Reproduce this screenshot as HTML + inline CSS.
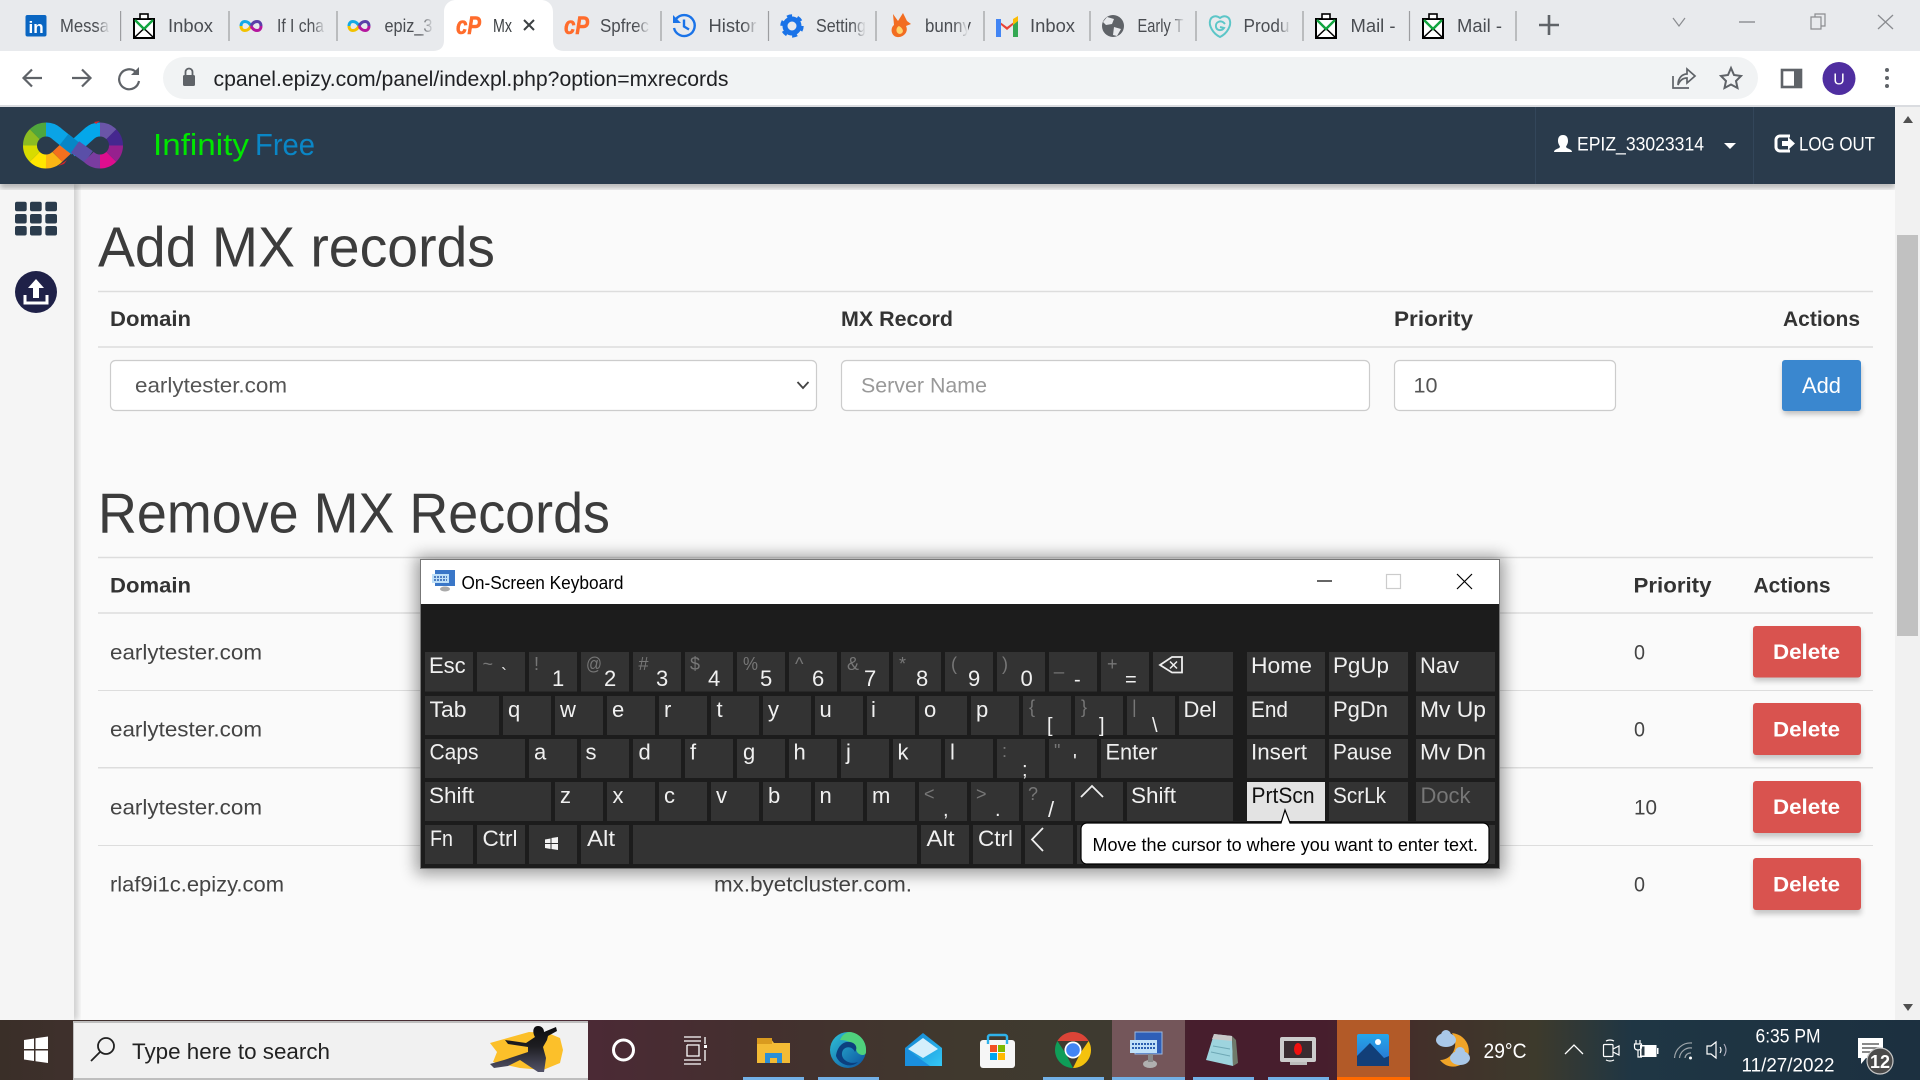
<!DOCTYPE html>
<html lang="en"><head><meta charset="utf-8"><title>Add MX records</title>
<style>
html,body{margin:0;padding:0;width:1920px;height:1080px;overflow:hidden;background:#fafafa}
svg{display:block}
text{font-family:"Liberation Sans",Arial,sans-serif}
</style></head><body>
<svg xmlns="http://www.w3.org/2000/svg" width="1920" height="1080" viewBox="0 0 1920 1080">
<defs>
<linearGradient id="tb" x1="0" x2="1" y1="0" y2="0">
<stop offset="0" stop-color="#3a2f28"/><stop offset=".05" stop-color="#40302e"/><stop offset=".31" stop-color="#4b2a35"/><stop offset=".4" stop-color="#43302e"/><stop offset=".5" stop-color="#40392e"/><stop offset=".58" stop-color="#3e3a30"/><stop offset=".62" stop-color="#471e2d"/><stop offset=".69" stop-color="#471e2d"/><stop offset=".74" stop-color="#43302a"/><stop offset=".8" stop-color="#3d3a2c"/><stop offset=".85" stop-color="#1f3644"/><stop offset="1" stop-color="#1c3040"/>
</linearGradient>
<filter id="b8" x="-10%" y="-10%" width="120%" height="120%"><feGaussianBlur stdDeviation="8"/></filter>
<filter id="b3" x="-20%" y="-20%" width="140%" height="140%"><feGaussianBlur stdDeviation="3"/></filter>
<linearGradient id="fade" x1="0" x2="1" y1="0" y2="0"><stop offset="0" stop-color="#e8eaed" stop-opacity="0"/><stop offset="1" stop-color="#e8eaed"/></linearGradient>
<linearGradient id="edge" x1="0" x2="1" y1="0" y2="1"><stop offset="0" stop-color="#2fc3d8"/><stop offset="1" stop-color="#0b4f9e"/></linearGradient>
<linearGradient id="mail" x1="0" x2="1" y1="0" y2="1"><stop offset="0" stop-color="#0f7fd0"/><stop offset="1" stop-color="#35c8f5"/></linearGradient>
<linearGradient id="photo" x1="0" x2="0" y1="0" y2="1"><stop offset="0" stop-color="#25a6ea"/><stop offset="1" stop-color="#2a6fd0"/></linearGradient>
<linearGradient id="kick" x1="0" x2="0" y1="0" y2="1"><stop offset="0" stop-color="#0c0c0e"/><stop offset=".45" stop-color="#1e1e22"/><stop offset="1" stop-color="#54546a"/></linearGradient>
<g id="env"><rect x="-10" y="-7" width="20" height="19" fill="#fff" stroke="#000" stroke-width="2"/><path d="M-10 12L10-7M-10-7L10 12" stroke="#000" stroke-width="1.500"/><path d="M-9-6L0 3L9-6" fill="none" stroke="#12a53f" stroke-width="2.400"/><rect x="-4" y="-12" width="8" height="5" fill="#fff" stroke="#000" stroke-width="1.600"/></g>
<g id="inf" fill="none" stroke-width="3"><path d="M0 0C-3-6-10-6-10 0" stroke="#12a9e6"/><path d="M-10 0C-10 6-3 6 0 0" stroke="#f2c200"/><path d="M0 0C3-6 10-6 10 0" stroke="#5b3ea8"/><path d="M10 0C10 6 3 6 0 0" stroke="#b5179e"/></g>
</defs>

<!-- tab strip -->
<rect width="1920" height="51" fill="#e8eaed"/>
<path d="M432 51C441 51 444 47 444 40V12C444 5 449 0 456 0H541C548 0 553 5 553 12V40C553 47 556 51 565 51Z" fill="#fff"/>
<g stroke="#9c9da0" stroke-width="1.200"><path d="M120.600 11V41M229 11V41M337 11V41M661 11V41M768.500 11V41M876 11V41M984 11V41M1090 11V41M1196 11V41M1303 11V41M1409.500 11V41M1516 11V41"/></g>
<g font-size="18" fill="#4a4d52">
<text x="60" y="32" textLength="49" lengthAdjust="spacingAndGlyphs">Messa</text>
<text x="168" y="32" textLength="45" lengthAdjust="spacingAndGlyphs">Inbox</text>
<text x="277" y="32" textLength="47" lengthAdjust="spacingAndGlyphs">If I cha</text>
<text x="384.500" y="32" textLength="48" lengthAdjust="spacingAndGlyphs">epiz_3</text>
<text x="493" y="32" fill="#3c4043" textLength="19" lengthAdjust="spacingAndGlyphs">Mx</text>
<text x="600" y="32" textLength="49" lengthAdjust="spacingAndGlyphs">Spfrec</text>
<text x="708.500" y="32" textLength="48" lengthAdjust="spacingAndGlyphs">Histor</text>
<text x="816" y="32" textLength="50" lengthAdjust="spacingAndGlyphs">Setting</text>
<text x="925" y="32" textLength="46" lengthAdjust="spacingAndGlyphs">bunny</text>
<text x="1030" y="32" textLength="45" lengthAdjust="spacingAndGlyphs">Inbox</text>
<text x="1137.500" y="32" textLength="46" lengthAdjust="spacingAndGlyphs">Early T</text>
<text x="1243.500" y="32" textLength="46" lengthAdjust="spacingAndGlyphs">Produ</text>
<text x="1350.500" y="32" textLength="45" lengthAdjust="spacingAndGlyphs">Mail -</text>
<text x="1457" y="32" textLength="45" lengthAdjust="spacingAndGlyphs">Mail -</text>
</g>
<g fill="url(#fade)"><rect x="96" y="10" width="14" height="32"/><rect x="312" y="10" width="14" height="32"/><rect x="420" y="10" width="14" height="32"/><rect x="636" y="10" width="14" height="32"/><rect x="744" y="10" width="14" height="32"/><rect x="852" y="10" width="14" height="32"/><rect x="954" y="10" width="14" height="32"/><rect x="1171" y="10" width="14" height="32"/><rect x="1277" y="10" width="14" height="32"/></g>
<path d="M524 20L534 30M534 20L524 30" stroke="#3c4043" stroke-width="2"/>
<!-- favicons -->
<rect x="25.500" y="15" width="21" height="21.500" rx="2" fill="#0a66c2"/><text x="28.500" y="33" font-size="17" font-weight="bold" fill="#fff">in</text>
<use href="#env" x="144" y="26"/><use href="#env" x="1326" y="26"/><use href="#env" x="1433" y="26"/>
<use href="#inf" x="251" y="26"/><use href="#inf" x="359" y="26"/>
<text x="456" y="34" font-size="25" font-weight="bold" font-style="italic" fill="#ff6c2c" stroke="#ff6c2c" stroke-width=".6" textLength="25" lengthAdjust="spacingAndGlyphs">cP</text>
<text x="564" y="34" font-size="25" font-weight="bold" font-style="italic" fill="#ff6c2c" stroke="#ff6c2c" stroke-width=".6" textLength="25" lengthAdjust="spacingAndGlyphs">cP</text>
<g fill="none" stroke="#1a73e8" stroke-width="2.400"><path d="M676 19A10.500 10.500 0 1 1 674 28"/><path d="M684 19.500V26.500L689 29.500"/></g><path d="M673 15V23H681Z" fill="#1a73e8"/>
<g transform="translate(792 26)"><circle r="7" fill="none" stroke="#1a73e8" stroke-width="5"/><circle r="10" fill="none" stroke="#1a73e8" stroke-width="3.400" stroke-dasharray="5 5.470"/></g>
<path d="M893 14L898 21L903 13L907 21L911 24L906 26C909 32 903 38 897 37C891 36 890 28 894 25Z" fill="#f26d21"/><path d="M899 26C895 28 896 34 900 34C904 33 904 29 899 26Z" fill="#ffd36b"/>
<g transform="translate(996 15)"><path d="M0 22V4L11 12L22 4V22H17V10L11 15L5 10V22Z" fill="#ea4335"/><rect x="0" y="4" width="5" height="18" fill="#4285f4"/><rect x="17" y="4" width="5" height="18" fill="#34a853"/><path d="M17 4L22 1V6L17 10Z" fill="#fbbc04"/></g>
<circle cx="1113" cy="26" r="11" fill="#5f6368"/><path d="M1107 17L1114 19L1112 24L1106 25L1103 22ZM1114 27L1121 29L1117 36L1113 35Z" fill="#e8eaed"/>
<path d="M1220 37C1212 33 1209 25 1210 21C1211 16 1216 15 1220 18C1224 15 1229 16 1230 21C1231 25 1228 33 1220 37ZM1225 24C1221 19 1215 22 1216 27C1217 31 1222 31 1224 28L1220 27" fill="none" stroke="#5cc6c8" stroke-width="2"/>
<path d="M1549 15V35M1539 25H1559" stroke="#5f6368" stroke-width="2.600"/>
<path d="M1673 18L1679 26L1685 18" fill="none" stroke="#8a8c90" stroke-width="1.200"/>
<path d="M1739 22H1755" stroke="#8a8c90" stroke-width="1.400"/>
<path d="M1811 17V29H1821V17ZM1815 17V14H1825V26H1821" fill="none" stroke="#8a8c90" stroke-width="1.200"/>
<path d="M1878 15L1893 29M1893 15L1878 29" stroke="#8a8c90" stroke-width="1.300"/>

<!-- toolbar -->
<rect y="51" width="1920" height="54" fill="#fff"/>
<rect y="105" width="1920" height="2" fill="#dadce0"/>
<rect x="163" y="57" width="1595" height="42" rx="21" fill="#f1f3f4"/>
<g fill="none" stroke="#5f6368" stroke-width="2.200">
<path d="M42 78H24M32 69.500L23.500 78L32 86.500"/>
<path d="M72 78H90M82 69.500L90.500 78L82 86.500"/>
<path d="M136 72A10 10 0 1 0 139 81"/></g>
<path d="M139 67V75H131Z" fill="#5f6368"/>
<rect x="183" y="75" width="12" height="11" rx="1.500" fill="#5f6368"/><path d="M185.500 75V72A3.500 3.500 0 0 1 192.500 72V75" fill="none" stroke="#5f6368" stroke-width="1.800"/>
<text x="213.500" y="86" font-size="21" fill="#202124" textLength="515" lengthAdjust="spacingAndGlyphs">cpanel.epizy.com/panel/indexpl.php?option=mxrecords</text>
<g fill="none" stroke="#5f6368" stroke-width="1.700"><path d="M1673 76V88H1689"/><path d="M1678 85C1678 77 1683 74 1687 74V69L1695 76L1687 83V78C1683 78 1680 80 1678 85Z"/>
<path d="M1731 68L1734 75L1741 76L1736 81L1737.500 88L1731 84.500L1724.500 88L1726 81L1721 76L1728 75Z" stroke-width="2"/></g>
<rect x="1782" y="70" width="19" height="17" fill="none" stroke="#5f6368" stroke-width="2.600"/><rect x="1794" y="70" width="7" height="17" fill="#5f6368"/>
<circle cx="1839" cy="78.500" r="16.500" fill="#4f2ea0"/><text x="1839" y="84.500" font-size="16" fill="#fff" text-anchor="middle">U</text>
<g fill="#5f6368"><circle cx="1887" cy="70" r="2"/><circle cx="1887" cy="78" r="2"/><circle cx="1887" cy="86" r="2"/></g>

<!-- page -->
<rect y="107" width="1920" height="913" fill="#fafafa"/>
<rect x="64" y="184" width="14" height="836" fill="#000" opacity=".16" filter="url(#b3)"/>
<rect y="184" width="74" height="836" fill="#f5f5f5"/>
<rect y="180" width="1895" height="8" fill="#000" opacity=".28" filter="url(#b3)"/>
<rect y="107" width="1895" height="77" fill="#2a3b4c"/>
<path d="M1535.500 107V184M1753.500 107V184" stroke="#33465a"/>
<!-- logo -->
<g fill="none" stroke-width="14">
<path d="M34.700 134.200A16 16 0 0 1 46 129.500" stroke="#4fa63c"/>
<path d="M30 145.500A16 16 0 0 1 34.700 134.200" stroke="#8cbc22"/>
<path d="M34.700 156.800A16 16 0 0 1 30 145.500" stroke="#d8dc00"/>
<path d="M46 161.500A16 16 0 0 1 34.700 156.800" stroke="#ffe600"/>
<path d="M57.300 156.800A16 16 0 0 1 46 161.500" stroke="#fbb614"/>
<path d="M72 143L57.300 156.800" stroke="#f4701e"/>
<path d="M100 129.500A16 16 0 0 0 88.700 134.200L70 151" stroke="#04a7ea"/>
<path d="M46 129.500A16 16 0 0 1 57.300 134.200L72 146" stroke="#0aa4e6"/>
<path d="M64 139.500L76 149" stroke="#0786c6"/>
<path d="M75 147L88.700 156.800" stroke="#5a4fa8"/>
<path d="M88.700 156.800A16 16 0 0 0 100 161.500" stroke="#7a3ca0"/>
<path d="M100 161.500A16 16 0 0 0 111.300 156.800" stroke="#de0e8e"/>
<path d="M111.300 156.800A16 16 0 0 0 116 145.500" stroke="#96208e"/>
<path d="M116 145.500A16 16 0 0 0 111.300 134.200" stroke="#45278f"/>
<path d="M111.300 134.200A16 16 0 0 0 100 129.500" stroke="#6a55a8"/>
</g>
<path d="M58 166L67 160L64 164ZM94 122L100 121L96 124Z" fill="#d8232a"/>
<text x="153" y="155" font-size="31" fill="#00e600" textLength="96" lengthAdjust="spacingAndGlyphs">Infinity</text>
<text x="255" y="155" font-size="31" fill="#0a86c6" textLength="60" lengthAdjust="spacingAndGlyphs">Free</text>
<!-- header right -->
<path d="M1563 135C1567 135 1568 138 1568 141C1568 144 1566 146 1566 147C1567 149 1572 149 1572 152H1554C1554 149 1559 149 1560 147C1560 146 1558 144 1558 141C1558 138 1559 135 1563 135Z" fill="#fff"/>
<text x="1577" y="150.500" font-size="19" fill="#fff" textLength="127" lengthAdjust="spacingAndGlyphs">EPIZ_33023314</text>
<path d="M1724 143H1736L1730 149Z" fill="#fff"/>
<path d="M1790 136H1780A4 4 0 0 0 1776 140V147A4 4 0 0 0 1780 151H1790" fill="none" stroke="#fff" stroke-width="3"/><path d="M1782 141H1788V137L1795 143.500L1788 150V146H1782Z" fill="#fff"/>
<text x="1799" y="150.500" font-size="19" fill="#fff" textLength="76" lengthAdjust="spacingAndGlyphs">LOG OUT</text>
<!-- sidebar icons -->
<g fill="#2a3b4c"><rect x="15" y="201.700" width="11.700" height="9.500" rx="2"/><rect x="30" y="201.700" width="11.700" height="9.500" rx="2"/><rect x="45.300" y="201.700" width="11.700" height="9.500" rx="2"/><rect x="15" y="214" width="11.700" height="9.500" rx="2"/><rect x="30" y="214" width="11.700" height="9.500" rx="2"/><rect x="45.300" y="214" width="11.700" height="9.500" rx="2"/><rect x="15" y="226" width="11.700" height="9.500" rx="2"/><rect x="30" y="226" width="11.700" height="9.500" rx="2"/><rect x="45.300" y="226" width="11.700" height="9.500" rx="2"/></g>
<circle cx="36" cy="292" r="21" fill="#1f2148"/><path d="M36 279L44 288H39V298H33V288H28Z" fill="#fff"/><path d="M25 295V303H47V295" fill="none" stroke="#fff" stroke-width="3"/>
<!-- add form -->
<text x="98" y="266.700" font-size="57" fill="#3c3c3c" textLength="397" lengthAdjust="spacingAndGlyphs">Add MX records</text>
<path d="M98 291.500H1873" stroke="#ddd" stroke-width="1.500"/>
<g font-size="21" font-weight="bold" fill="#333">
<text x="110" y="326" textLength="81" lengthAdjust="spacingAndGlyphs">Domain</text>
<text x="841" y="326" textLength="112" lengthAdjust="spacingAndGlyphs">MX Record</text>
<text x="1394" y="326" textLength="79" lengthAdjust="spacingAndGlyphs">Priority</text>
<text x="1783" y="326" textLength="77" lengthAdjust="spacingAndGlyphs">Actions</text></g>
<path d="M98 347H1873" stroke="#ddd" stroke-width="1.500"/>
<g fill="#fff" stroke="#ccc" stroke-width="1.200"><rect x="110.500" y="360.500" width="706" height="50" rx="5"/><rect x="841.500" y="360.500" width="528" height="50" rx="5"/><rect x="1394.500" y="360.500" width="221" height="50" rx="5"/></g>
<text x="135" y="392.700" font-size="21" fill="#555" textLength="152" lengthAdjust="spacingAndGlyphs">earlytester.com</text>
<path d="M797.500 382L803 388L808.500 382" fill="none" stroke="#444" stroke-width="1.800"/>
<text x="861" y="392.700" font-size="21" fill="#999" textLength="126" lengthAdjust="spacingAndGlyphs">Server Name</text>
<text x="1413.500" y="392.700" font-size="21" fill="#555" textLength="24" lengthAdjust="spacingAndGlyphs">10</text>
<rect x="1783" y="364" width="78" height="50" rx="3" fill="#000" opacity=".25" filter="url(#b3)"/>
<rect x="1782" y="360" width="79" height="51" rx="3" fill="#3a87cf"/>
<text x="1802" y="393" font-size="22" fill="#fff" textLength="39" lengthAdjust="spacingAndGlyphs">Add</text>
<!-- remove table -->
<text x="98" y="532.500" font-size="57" fill="#3c3c3c" textLength="512" lengthAdjust="spacingAndGlyphs">Remove MX Records</text>
<path d="M98 557.500H1873" stroke="#ddd" stroke-width="1.500"/>
<g font-size="21" font-weight="bold" fill="#333">
<text x="110" y="592.500" textLength="81" lengthAdjust="spacingAndGlyphs">Domain</text>
<text x="1633.500" y="592.500" textLength="78" lengthAdjust="spacingAndGlyphs">Priority</text>
<text x="1753.500" y="592.500" textLength="77" lengthAdjust="spacingAndGlyphs">Actions</text></g>
<path d="M98 613H1873M98 767.800H1873" stroke="#ddd" stroke-width="1.500"/>
<path d="M98 690.500H1873M98 845.500H1873" stroke="#ddd" stroke-width="1"/>
<g font-size="21" fill="#444">
<text x="110" y="659.500" textLength="152" lengthAdjust="spacingAndGlyphs">earlytester.com</text>
<text x="110" y="736.500" textLength="152" lengthAdjust="spacingAndGlyphs">earlytester.com</text>
<text x="110" y="814.500" textLength="152" lengthAdjust="spacingAndGlyphs">earlytester.com</text>
<text x="110" y="891.500" textLength="174" lengthAdjust="spacingAndGlyphs">rlaf9i1c.epizy.com</text>
<text x="714" y="891.500" textLength="198" lengthAdjust="spacingAndGlyphs">mx.byetcluster.com.</text>
<text x="1634" y="659.500" textLength="11" lengthAdjust="spacingAndGlyphs">0</text>
<text x="1634" y="736.500" textLength="11" lengthAdjust="spacingAndGlyphs">0</text>
<text x="1634" y="814.500" textLength="23" lengthAdjust="spacingAndGlyphs">10</text>
<text x="1634" y="891.500" textLength="11" lengthAdjust="spacingAndGlyphs">0</text></g>
<g fill="#000" opacity=".22" filter="url(#b3)"><rect x="1754" y="630" width="107" height="51"/><rect x="1754" y="707" width="107" height="52"/><rect x="1754" y="785" width="107" height="52"/><rect x="1754" y="862" width="107" height="52"/></g>
<g fill="#d9534f"><rect x="1753" y="626" width="108" height="51.500" rx="3"/><rect x="1753" y="703" width="108" height="52" rx="3"/><rect x="1753" y="781" width="108" height="52" rx="3"/><rect x="1753" y="858" width="108" height="52" rx="3"/></g>
<g font-size="21.500" font-weight="bold" fill="#fff">
<text x="1773" y="659" textLength="67" lengthAdjust="spacingAndGlyphs">Delete</text>
<text x="1773" y="736.500" textLength="67" lengthAdjust="spacingAndGlyphs">Delete</text>
<text x="1773" y="814" textLength="67" lengthAdjust="spacingAndGlyphs">Delete</text>
<text x="1773" y="891.500" textLength="67" lengthAdjust="spacingAndGlyphs">Delete</text></g>
<!-- scrollbar -->
<rect x="1895" y="107" width="25" height="913" fill="#f1f1f1"/>
<rect x="1897" y="235" width="21" height="401" fill="#c1c1c1"/>
<path d="M1908 116L1913 123H1903Z" fill="#505050"/>
<path d="M1908 1011L1913 1004H1903Z" fill="#505050"/>

<!-- OSK -->
<rect x="416" y="556" width="1088" height="318" fill="#000" opacity=".38" filter="url(#b8)"/>
<rect x="420.500" y="559.500" width="1079" height="309" fill="#1c1c1c" stroke="#777"/>
<rect x="421" y="560" width="1078" height="44" fill="#fff"/>
<g transform="translate(432 570)"><rect x="3" y="0" width="20" height="16" fill="#3a77c8"/><rect x="0" y="4" width="17" height="9" fill="#bfe0f8"/><path d="M2 7H15M2 10H15" stroke="#2a5fb0" stroke-width="1.500" stroke-dasharray="2 1"/><ellipse cx="13" cy="19" rx="5" ry="2.500" fill="#aaa"/></g>
<text x="461.500" y="589" font-size="18" fill="#000" textLength="162" lengthAdjust="spacingAndGlyphs">On-Screen Keyboard</text>
<path d="M1317 581H1332" stroke="#000" stroke-width="1.200"/>
<rect x="1386.500" y="574.500" width="14" height="14" fill="none" stroke="#ccc" stroke-width="1.200"/>
<path d="M1457 574L1472 589M1472 574L1457 589" stroke="#000" stroke-width="1.200"/>
<g fill="#333">
<rect x="425" y="652" width="48" height="39.500"/><rect x="477" y="652" width="48" height="39.500"/><rect x="529" y="652" width="48" height="39.500"/><rect x="581" y="652" width="48" height="39.500"/><rect x="633" y="652" width="48" height="39.500"/><rect x="685" y="652" width="48" height="39.500"/><rect x="737" y="652" width="48" height="39.500"/><rect x="789" y="652" width="48" height="39.500"/><rect x="841" y="652" width="48" height="39.500"/><rect x="893" y="652" width="48" height="39.500"/><rect x="945" y="652" width="48" height="39.500"/><rect x="997" y="652" width="48" height="39.500"/><rect x="1049" y="652" width="48" height="39.500"/><rect x="1101" y="652" width="48" height="39.500"/><rect x="1153" y="652" width="80" height="39.500"/><rect x="1247" y="652" width="78" height="39.500"/><rect x="1329" y="652" width="79" height="39.500"/><rect x="1416" y="652" width="79" height="39.500"/>
<rect x="425" y="696" width="74" height="39"/><rect x="503" y="696" width="48" height="39"/><rect x="555" y="696" width="48" height="39"/><rect x="607" y="696" width="48" height="39"/><rect x="659" y="696" width="48" height="39"/><rect x="711" y="696" width="48" height="39"/><rect x="763" y="696" width="48" height="39"/><rect x="815" y="696" width="48" height="39"/><rect x="867" y="696" width="48" height="39"/><rect x="919" y="696" width="48" height="39"/><rect x="971" y="696" width="48" height="39"/><rect x="1023" y="696" width="48" height="39"/><rect x="1075" y="696" width="48" height="39"/><rect x="1127" y="696" width="48" height="39"/><rect x="1179" y="696" width="54" height="39"/><rect x="1247" y="696" width="78" height="39"/><rect x="1329" y="696" width="79" height="39"/><rect x="1416" y="696" width="79" height="39"/>
<rect x="425" y="739" width="100" height="39"/><rect x="529" y="739" width="48" height="39"/><rect x="581" y="739" width="48" height="39"/><rect x="633" y="739" width="48" height="39"/><rect x="685" y="739" width="48" height="39"/><rect x="737" y="739" width="48" height="39"/><rect x="789" y="739" width="48" height="39"/><rect x="841" y="739" width="48" height="39"/><rect x="893" y="739" width="48" height="39"/><rect x="945" y="739" width="48" height="39"/><rect x="997" y="739" width="48" height="39"/><rect x="1049" y="739" width="48" height="39"/><rect x="1101" y="739" width="132" height="39"/><rect x="1247" y="739" width="78" height="39"/><rect x="1329" y="739" width="79" height="39"/><rect x="1416" y="739" width="79" height="39"/>
<rect x="425" y="782" width="126" height="39"/><rect x="555" y="782" width="48" height="39"/><rect x="607" y="782" width="48" height="39"/><rect x="659" y="782" width="48" height="39"/><rect x="711" y="782" width="48" height="39"/><rect x="763" y="782" width="48" height="39"/><rect x="815" y="782" width="48" height="39"/><rect x="867" y="782" width="48" height="39"/><rect x="919" y="782" width="48" height="39"/><rect x="971" y="782" width="48" height="39"/><rect x="1023" y="782" width="48" height="39"/><rect x="1075" y="782" width="48" height="39"/><rect x="1127" y="782" width="106" height="39"/><rect x="1329" y="782" width="79" height="39"/><rect x="1416" y="782" width="79" height="39"/>
<rect x="425" y="825" width="48" height="39"/><rect x="477" y="825" width="48" height="39"/><rect x="529" y="825" width="48" height="39"/><rect x="581" y="825" width="48" height="39"/><rect x="633" y="825" width="284" height="39"/><rect x="921" y="825" width="48" height="39"/><rect x="973" y="825" width="48" height="39"/><rect x="1025" y="825" width="48" height="39"/><rect x="1077" y="825" width="418" height="39"/>
</g>
<rect x="1247" y="782" width="78" height="39" fill="#e3e3e3"/>
<g font-size="22" fill="#f0f0f0">
<text x="429" y="673">Esc</text><text x="552" y="686">1</text><text x="604" y="686">2</text><text x="656" y="686">3</text><text x="708" y="686">4</text><text x="760" y="686">5</text><text x="812" y="686">6</text><text x="864" y="686">7</text><text x="916" y="686">8</text><text x="968" y="686">9</text><text x="1020.500" y="686">0</text>
<text x="1251" y="673" textLength="61" lengthAdjust="spacingAndGlyphs">Home</text><text x="1333" y="673" textLength="56" lengthAdjust="spacingAndGlyphs">PgUp</text><text x="1420" y="673" textLength="39" lengthAdjust="spacingAndGlyphs">Nav</text>
<text x="429.500" y="717" textLength="37" lengthAdjust="spacingAndGlyphs">Tab</text><text x="508" y="717">q</text><text x="560" y="717">w</text><text x="612" y="717">e</text><text x="664" y="717">r</text><text x="716.500" y="717">t</text><text x="768" y="717">y</text><text x="819.500" y="717">u</text><text x="871" y="717">i</text><text x="924" y="717">o</text><text x="976" y="717">p</text><text x="1183.500" y="717" textLength="33" lengthAdjust="spacingAndGlyphs">Del</text>
<text x="1251" y="717" textLength="37" lengthAdjust="spacingAndGlyphs">End</text><text x="1333" y="717" textLength="55" lengthAdjust="spacingAndGlyphs">PgDn</text><text x="1420" y="717" textLength="66" lengthAdjust="spacingAndGlyphs">Mv Up</text>
<text x="429.500" y="759.500" textLength="49" lengthAdjust="spacingAndGlyphs">Caps</text><text x="534" y="759.500">a</text><text x="585.500" y="759.500">s</text><text x="638.500" y="759.500">d</text><text x="690" y="759.500">f</text><text x="743" y="759.500">g</text><text x="793.500" y="759.500">h</text><text x="846" y="759.500">j</text><text x="897.500" y="759.500">k</text><text x="950" y="759.500">l</text><text x="1105.500" y="759.500" textLength="52" lengthAdjust="spacingAndGlyphs">Enter</text>
<text x="1251" y="759.500" textLength="56" lengthAdjust="spacingAndGlyphs">Insert</text><text x="1333" y="759.500" textLength="59" lengthAdjust="spacingAndGlyphs">Pause</text><text x="1420" y="759.500" textLength="66" lengthAdjust="spacingAndGlyphs">Mv Dn</text>
<text x="429" y="803" textLength="45" lengthAdjust="spacingAndGlyphs">Shift</text><text x="560" y="803">z</text><text x="612.500" y="803">x</text><text x="664" y="803">c</text><text x="716" y="803">v</text><text x="768" y="803">b</text><text x="819.500" y="803">n</text><text x="872" y="803">m</text><text x="1131" y="803" textLength="45" lengthAdjust="spacingAndGlyphs">Shift</text>
<text x="1333" y="803" textLength="53" lengthAdjust="spacingAndGlyphs">ScrLk</text>
<text x="430" y="846" textLength="23" lengthAdjust="spacingAndGlyphs">Fn</text><text x="482.500" y="846" textLength="35" lengthAdjust="spacingAndGlyphs">Ctrl</text><text x="587" y="846" textLength="28" lengthAdjust="spacingAndGlyphs">Alt</text><text x="926.500" y="846" textLength="28" lengthAdjust="spacingAndGlyphs">Alt</text><text x="978" y="846" textLength="35" lengthAdjust="spacingAndGlyphs">Ctrl</text>
<text x="1022" y="776" font-size="20">;</text><text x="943" y="816" font-size="20">,</text><text x="995" y="816" font-size="20">.</text><text x="1048" y="817" font-size="22">/</text><text x="1047" y="732" font-size="20">[</text><text x="1099" y="732" font-size="20">]</text><text x="1152" y="732" font-size="20">\</text><text x="1074" y="686" font-size="20">-</text><text x="1125" y="686" font-size="20">=</text><text x="501" y="681" font-size="18">`</text><text x="1073" y="768" font-size="20">'</text>
</g>
<g font-size="18" fill="#777">
<text x="482.500" y="670">~</text><text x="534" y="670">!</text><text x="586" y="670" textLength="16" lengthAdjust="spacingAndGlyphs">@</text><text x="638.500" y="670">#</text><text x="690" y="670">$</text><text x="743" y="670" textLength="15" lengthAdjust="spacingAndGlyphs">%</text><text x="795" y="670">^</text><text x="847" y="670">&amp;</text><text x="899" y="670">*</text><text x="951" y="670">(</text><text x="1002" y="670">)</text><text x="1054" y="670">_</text><text x="1107" y="670">+</text>
<text x="1029" y="713">{</text><text x="1081" y="713">}</text><text x="1132" y="713">|</text><text x="1002" y="757">:</text><text x="1054" y="757">"</text><text x="924" y="800">&lt;</text><text x="976" y="800">&gt;</text><text x="1028" y="800">?</text>
</g>
<text x="1420.500" y="803" font-size="22" fill="#777" textLength="50" lengthAdjust="spacingAndGlyphs">Dock</text>
<text x="1251.500" y="803" font-size="22" fill="#111" textLength="63" lengthAdjust="spacingAndGlyphs">PrtScn</text>
<path d="M1172 657H1182V672.500H1172L1160 665Z" fill="none" stroke="#eee" stroke-width="1.800"/><path d="M1170 661.500L1177 668.500M1177 661.500L1170 668.500" stroke="#eee" stroke-width="1.500"/>
<path d="M1081 797L1092 786L1103 797" fill="none" stroke="#eee" stroke-width="1.800"/>
<path d="M1043 828L1032 839.500L1043 851" fill="none" stroke="#eee" stroke-width="1.800"/>
<g fill="#f4f4f4"><path d="M545 839.500L550.500 838.500V843H545ZM551.500 838L558 837V843H551.500ZM545 844H550.500V849L545 848ZM551.500 844H558V850L551.500 849Z"/></g>
<!-- tooltip -->
<path d="M1087 823H1281L1285 810L1290 823H1483A6 6 0 0 1 1489 829V858A6 6 0 0 1 1483 864H1087A6 6 0 0 1 1081 858V829A6 6 0 0 1 1087 823Z" fill="#fff" stroke="#000" stroke-width="1.200"/>
<text x="1092.500" y="851" font-size="18" fill="#000" textLength="385.500" lengthAdjust="spacingAndGlyphs">Move the cursor to where you want to enter text.</text>

<!-- taskbar -->
<rect y="1020" width="1920" height="60" fill="url(#tb)"/>
<rect x="73" y="1021" width="515" height="59" fill="#bebebe"/>
<rect x="74" y="1023" width="514" height="55" fill="#f1f1f1"/>
<path d="M24 1040L34 1038.500V1049H24ZM35.500 1038.300L48 1036.500V1049H35.500ZM24 1050.500H34V1061L24 1059.500ZM35.500 1050.500H48V1063L35.500 1061.300Z" fill="#fff"/>
<circle cx="106" cy="1046" r="8" fill="none" stroke="#222" stroke-width="1.800"/><path d="M100 1052L91 1061" stroke="#222" stroke-width="1.800"/>
<text x="132" y="1059" font-size="22" fill="#222" textLength="198" lengthAdjust="spacingAndGlyphs">Type here to search</text>
<!-- mascot -->
<path d="M490 1043L529 1032L548 1033L560 1038L563 1050L560 1063L543 1070L520 1068L493 1062L497 1052Z" fill="#fcc02a"/>
<path d="M505 1040L526 1043L535 1037C532 1032 533 1026 538 1026C542 1026 544 1029 544 1032L556 1027L557 1031L548 1036L547 1040L543 1047L546 1058L544 1072H538L529 1066L520 1060L508 1066L494 1068L490 1064L504 1060L528 1052L528 1047L508 1044Z" fill="url(#kick)"/>
<!-- cortana / task view -->
<circle cx="623.500" cy="1050" r="10" fill="none" stroke="#fff" stroke-width="3"/>
<g fill="none" stroke="#fff" stroke-width="1.300"><path d="M684 1037H701M684 1041H701M684 1060H701M684 1064H701M687 1045V1056H699V1045H687M705 1037V1044M705 1050V1061"/></g><rect x="704" y="1045" width="3" height="3" fill="#fff"/>
<!-- explorer -->
<path d="M757 1039H771L774 1043H790V1063H757Z" fill="#f3bb35"/><rect x="757" y="1038" width="15" height="6" fill="#d99a1f"/><path d="M765 1063V1053H782V1063H777V1058H770V1063Z" fill="#2a8fd8"/>
<!-- edge -->
<circle cx="848" cy="1050" r="18" fill="url(#edge)"/><path d="M850 1032C860 1033 867 1042 866 1052C866 1056 860 1056 857 1052C855 1046 851 1040 840 1040C842 1035 846 1032 850 1032Z" fill="#4fd17d"/><path d="M855 1052C852 1045 843 1046 842 1053C841 1060 850 1065 858 1062C852 1068 840 1066 836 1056C837 1048 842 1041 850 1042C856 1043 858 1048 855 1052Z" fill="#0c3f7f"/>
<!-- mail -->
<path d="M923 1033L942 1048V1066H905V1048Z" fill="url(#mail)"/><path d="M908 1049L923 1038L938 1049L923 1058Z" fill="#d4effc"/><path d="M905 1048L930 1066H905Z" fill="#1a8fde"/>
<!-- store -->
<rect x="980" y="1040" width="35" height="28" rx="3" fill="#f6f6f6"/><path d="M988 1044V1037A2 2 0 0 1 990 1035H1005A2 2 0 0 1 1007 1037V1044" fill="none" stroke="#2fb2ea" stroke-width="2.400"/>
<rect x="990" y="1045" width="7" height="7" fill="#f25022"/><rect x="998" y="1045" width="7" height="7" fill="#7fba00"/><rect x="990" y="1053" width="7" height="7" fill="#00a4ef"/><rect x="998" y="1053" width="7" height="7" fill="#ffb900"/>
<!-- chrome -->
<g transform="translate(1073 1050)"><path d="M-15.600-9A18 18 0 0 1 15.600-9H0Z" fill="#db4437"/><path d="M15.600-9A18 18 0 0 1 0 18L8 2Z" fill="#f4c20d"/><path d="M0 18A18 18 0 0 1-15.600-9L-7 4Z" fill="#0f9d58"/><circle r="8.500" fill="#fff"/><circle r="6.800" fill="#4285f4"/></g>
<!-- OSK taskbar -->
<rect x="1112" y="1020" width="73" height="60" fill="#74565a"/>
<g transform="translate(1130 1032)"><rect x="5" y="0" width="27" height="22" fill="#2e5fb8" stroke="#9bb8e0"/><rect x="0" y="8" width="27" height="13" fill="#bfe0f8"/><path d="M2 12H25M2 16H25" stroke="#2a5fb0" stroke-width="2" stroke-dasharray="2 1"/><ellipse cx="20" cy="32" rx="7" ry="4" fill="#b0b0b0"/><rect x="18" y="22" width="5" height="8" fill="#888"/></g>
<!-- notepad -->
<path d="M1214 1034L1232 1036L1233 1066L1206 1060Z" fill="#9ed4de"/><path d="M1214 1034L1232 1036L1232 1041L1212 1039Z" fill="#c8c8c8"/><path d="M1232 1036L1236 1040L1238 1063L1233 1066Z" fill="#6f7a6a"/><path d="M1213 1046L1230 1049M1211 1052L1230 1056" stroke="#6ea8b5"/>
<!-- recorder -->
<rect x="1280" y="1037" width="36" height="25" rx="2" fill="#ccc"/><rect x="1284" y="1041" width="28" height="17" fill="#3a2b30"/><ellipse cx="1298" cy="1049" rx="4" ry="6" fill="#f01010"/><rect x="1290" y="1062" width="17" height="3" fill="#bbb"/>
<!-- photos -->
<rect x="1337" y="1020" width="73" height="60" fill="#b25a28"/>
<rect x="1357" y="1034" width="32" height="32" rx="2" fill="url(#photo)"/><path d="M1357 1066V1056L1370 1043L1384 1058L1389 1056V1066Z" fill="#123f78"/><circle cx="1378" cy="1042" r="3" fill="#fff"/>
<!-- weather -->
<path d="M1452 1033C1470 1035 1474 1056 1462 1064C1456 1068 1446 1068 1440 1060C1452 1060 1460 1046 1452 1033Z" fill="#f0a428"/>
<ellipse cx="1446" cy="1040" rx="10" ry="7" fill="#a9c8e8"/><circle cx="1446" cy="1035" r="5" fill="#a9c8e8"/><ellipse cx="1460" cy="1058" rx="10" ry="7" fill="#a9c8e8"/><circle cx="1460" cy="1052" r="5" fill="#a9c8e8"/>
<text x="1483.500" y="1058" font-size="21" fill="#fff" textLength="43" lengthAdjust="spacingAndGlyphs">29°C</text>
<!-- tray -->
<path d="M1565 1054L1574 1045L1583 1054" fill="none" stroke="#fff" stroke-width="1.300"/>
<g fill="none" stroke="#fff" stroke-width="1.200"><rect x="1603.500" y="1044.500" width="9.500" height="12" rx="1"/><path d="M1613 1049L1619 1046V1055L1613 1052M1606 1041Q1610 1039 1614 1041M1606 1060Q1610 1062 1614 1060"/></g>
<rect x="1640.500" y="1045.500" width="15.500" height="11" fill="#fff" stroke="#fff"/><rect x="1657" y="1048" width="1.500" height="6" fill="#fff"/><rect x="1641.500" y="1046.500" width="3" height="9" fill="#2a3a44"/><path d="M1636 1040V1044M1640 1040V1044M1634.500 1044H1641.500V1047Q1641.500 1050 1638 1050Q1634.500 1050 1634.500 1047ZM1638 1050V1057H1642" fill="none" stroke="#fff" stroke-width="1.200"/>
<g fill="none" stroke="#9fa6ab" stroke-width="1.200"><path d="M1674.500 1058A16 16 0 0 1 1692 1043M1679.500 1058A11 11 0 0 1 1692 1048M1685 1058A5.500 5.500 0 0 1 1691 1053"/></g><circle cx="1690.500" cy="1058" r="1.500" fill="#fff"/>
<path d="M1707 1046H1711L1716 1042V1058L1711 1054H1707Z" fill="none" stroke="#fff" stroke-width="1.200"/><path d="M1720 1047Q1722 1050 1720 1053" fill="none" stroke="#fff" stroke-width="1.100"/><path d="M1724 1044Q1728 1050 1724 1056" fill="none" stroke="#aab" stroke-width="1.100"/>
<text x="1788" y="1042.500" font-size="19" fill="#fff" text-anchor="middle" textLength="65" lengthAdjust="spacingAndGlyphs">6:35 PM</text>
<text x="1788" y="1071.500" font-size="19" fill="#fff" text-anchor="middle" textLength="93" lengthAdjust="spacingAndGlyphs">11/27/2022</text>
<path d="M1858 1038H1883V1058H1866L1861 1064V1058H1858Z" fill="#fff"/><path d="M1862 1044H1879M1862 1048H1879M1862 1052H1875" stroke="#444" stroke-width="1.200"/>
<circle cx="1880" cy="1061" r="13" fill="#4a4a4a" stroke="#c8c8c8" stroke-width="1.200"/><text x="1880" y="1068" font-size="18" font-weight="bold" fill="#fff" text-anchor="middle">12</text>
<!-- indicators -->
<g fill="#72b0e6"><rect x="743" y="1077" width="61" height="3"/><rect x="818" y="1077" width="61" height="3"/><rect x="1043" y="1077" width="61" height="3"/><rect x="1112" y="1077" width="73" height="3"/><rect x="1193" y="1077" width="61" height="3"/><rect x="1268" y="1077" width="61" height="3"/></g>
<rect x="1337" y="1077" width="73" height="3" fill="#ff6a00"/>
</svg>
</body></html>
